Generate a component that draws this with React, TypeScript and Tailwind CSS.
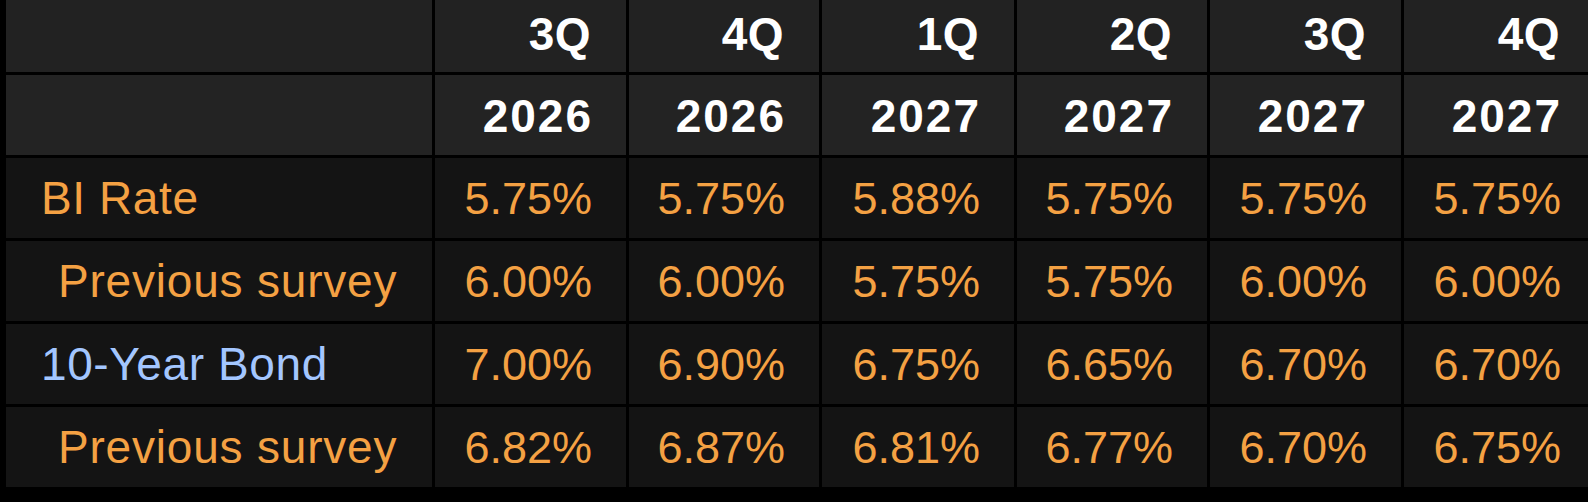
import { Fragment } from 'react';

const quarters = [
  { q: '3Q', y: '2026' },
  { q: '4Q', y: '2026' },
  { q: '1Q', y: '2027' },
  { q: '2Q', y: '2027' },
  { q: '3Q', y: '2027' },
  { q: '4Q', y: '2027' },
];

type Row = { label: string; indent?: boolean; blue?: boolean; values: string[] };

const rows: Row[] = [
  { label: 'BI Rate', values: ['5.75%', '5.75%', '5.88%', '5.75%', '5.75%', '5.75%'] },
  { label: 'Previous survey', indent: true, values: ['6.00%', '6.00%', '5.75%', '5.75%', '6.00%', '6.00%'] },
  { label: '10-Year Bond', blue: true, values: ['7.00%', '6.90%', '6.75%', '6.65%', '6.70%', '6.70%'] },
  { label: 'Previous survey', indent: true, values: ['6.82%', '6.87%', '6.81%', '6.77%', '6.70%', '6.75%'] },
];

const font = { fontFamily: '"Liberation Sans", Arial, sans-serif' };

export default function App() {
  return (
    <div className="w-[1588px] h-[502px] overflow-hidden bg-black" style={font}>
      <div className="w-[1600px] pl-[6px] grid grid-cols-[426px_191px_190px_192px_190px_191px_191px] grid-rows-[72px_80px_80px_80px_80px_80px] gap-[3px]">
        {/* header: quarter */}
        <div className="bg-[#222222]" />
        {quarters.map((c, i) => (
          <div
            key={'q' + i}
            className="bg-[#222222] flex items-center justify-end pr-[35px] pb-[5px] text-white font-bold text-[46px] leading-none tracking-[0.5px]"
          >
            {c.q}
          </div>
        ))}

        {/* header: year */}
        <div className="bg-[#232323]" />
        {quarters.map((c, i) => (
          <div
            key={'y' + i}
            className="bg-[#232323] flex items-center justify-end pr-[33px] pt-[2px] text-white font-bold text-[46px] leading-none tracking-[2px]"
          >
            {c.y}
          </div>
        ))}

        {rows.map((r, ri) => (
          <Fragment key={'r' + ri}>
            <div
              className={
                'bg-[#141414] flex items-center text-[46px] leading-none ' +
                (r.indent ? 'pl-[52px] tracking-[0.8px] ' : 'pl-[35px] tracking-[0.6px] ') +
                (r.blue ? 'text-[#a3c6ff]' : 'text-[#f4a143]')
              }
            >
              {r.label}
            </div>
            {r.values.map((v, vi) => (
              <div
                key={'v' + vi}
                className="bg-[#141414] flex items-center justify-end pr-[34px] text-[#f4a143] text-[45px] leading-none"
              >
                {v}
              </div>
            ))}
          </Fragment>
        ))}
      </div>
    </div>
  );
}
